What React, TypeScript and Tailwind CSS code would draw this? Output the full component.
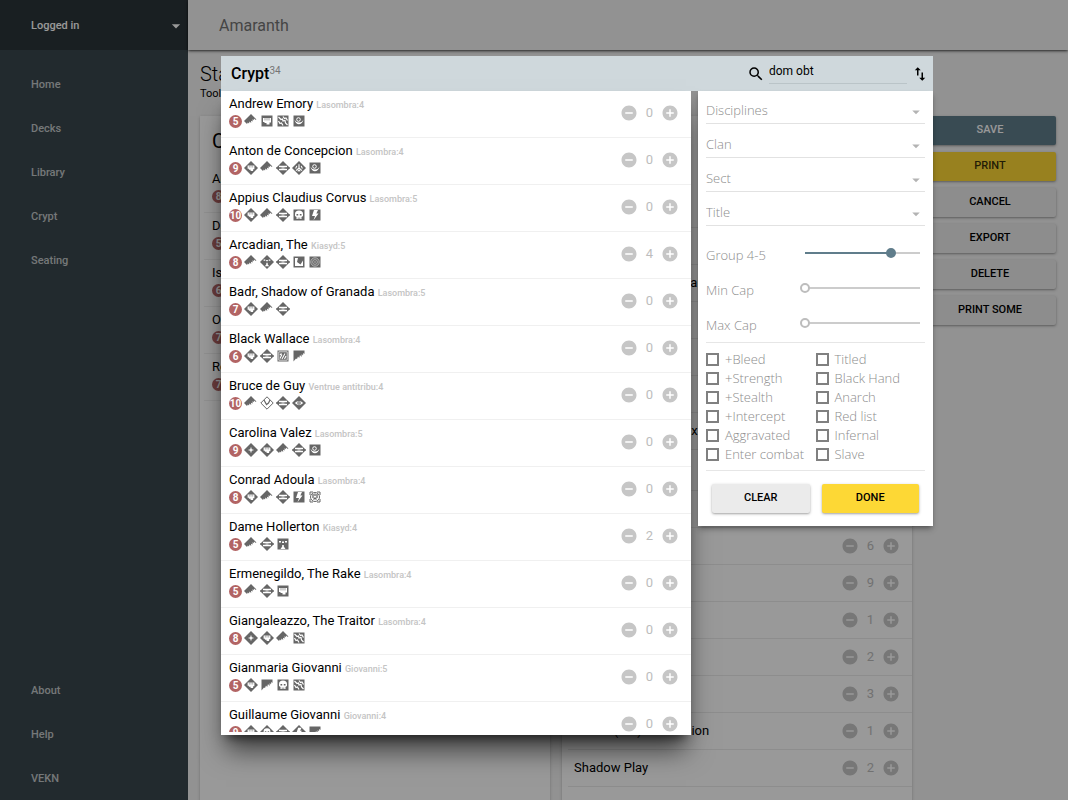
import { useState, type ReactNode } from "react";
import { MdAddCircle, MdArrowDropDown, MdRemoveCircle, MdSearch, MdSwapVert } from "react-icons/md";

type Vampire = {
    name: string;
    clan?: string;
    cap: number;
    count: number;
    // lower case is basic level (square), upper case is superior (diamond)
    disciplines: string[];
};

const vampires: Vampire[] = [
    { name: "Andrew Emory", clan: "Lasombra:4", cap: 5, count: 0, disciplines: ["DOM", "pot", "cel", "obf"] },
    { name: "Anton de Concepcion", clan: "Lasombra:4", cap: 9, count: 0, disciplines: ["POT", "DOM", "OBT", "ANI", "obf"] },
    { name: "Appius Claudius Corvus", clan: "Lasombra:5", cap: 10, count: 0, disciplines: ["POT", "DOM", "OBT", "nec", "tha"] },
    { name: "Arcadian, The", clan: "Kiasyd:5", cap: 8, count: 4, disciplines: ["DOM", "MYT", "OBT", "for", "chi"] },
    { name: "Badr, Shadow of Granada", clan: "Lasombra:5", cap: 7, count: 0, disciplines: ["POT", "DOM", "OBT"] },
    { name: "Black Wallace", clan: "Lasombra:4", cap: 6, count: 0, disciplines: ["POT", "OBT", "pro", "dom"] },
    { name: "Bruce de Guy", clan: "Ventrue antitribu:4", cap: 10, count: 0, disciplines: ["DOM", "FOR", "OBT", "AUS"] },
    { name: "Carolina Valez", clan: "Lasombra:5", cap: 9, count: 0, disciplines: ["PRE", "POT", "DOM", "OBT", "obf"] },
    { name: "Conrad Adoula", clan: "Lasombra:4", cap: 8, count: 0, disciplines: ["POT", "DOM", "OBT", "tha", "ani"] },
    { name: "Dame Hollerton", clan: "Kiasyd:4", cap: 5, count: 2, disciplines: ["DOM", "OBT", "myt"] },
    { name: "Ermenegildo, The Rake", clan: "Lasombra:4", cap: 5, count: 0, disciplines: ["DOM", "OBT", "pot"] },
    { name: "Giangaleazzo, The Traitor", clan: "Lasombra:4", cap: 8, count: 0, disciplines: ["PRE", "POT", "DOM", "cel"] },
    { name: "Gianmaria Giovanni", clan: "Giovanni:5", cap: 5, count: 0, disciplines: ["POT", "dom", "nec", "cel"] },
    { name: "Guillaume Giovanni", clan: "Giovanni:4", cap: 9, count: 0, disciplines: ["POT", "NEC", "OBT", "THA", "dom"] },
];

const deckCrypt: Vampire[] = [
    { name: "Arcadian, The", cap: 8, count: 4, disciplines: [] },
    { name: "Dame Hollerton", cap: 5, count: 2, disciplines: [] },
    { name: "Isanwayen", cap: 6, count: 2, disciplines: [] },
    { name: "Omme Enberbenight", cap: 7, count: 2, disciplines: [] },
    { name: "Roderick Phillips", cap: 7, count: 2, disciplines: [] },
];

const library = [
    [
        { name: "Blood Doll", count: 2 },
        { name: "Charisma", count: 1 },
        { name: "Power Base: Montreal", count: 1 },
        { name: "Coven, The", count: 1 },
        { name: "Club Zombie", count: 1 },
        { name: "Fame", count: 1 },
        { name: "Dreams of the Sphinx", count: 1 },
    ],
    [
        { name: "Giant's Blood", count: 1 },
        { name: "Vessel", count: 4 },
        { name: "Govern", count: 6 },
        { name: "Enchant Kindred", count: 9 },
        { name: "Wash", count: 1 },
        { name: "Mirror Walk", count: 2 },
        { name: "Parthenon", count: 3 },
        { name: "Pentex(TM) Subversion", count: 1 },
        { name: "Shadow Play", count: 2 },
    ],
    [
        { name: "Shroud", count: 2 },
    ],
];

const checks = [
    "+Bleed", "+Strength", "+Stealth", "+Intercept", "Aggravated", "Enter combat",
    "Titled", "Black Hand", "Anarch", "Red list", "Infernal", "Slave",
];

const glyphs: Record<string, ReactNode> = {
    pot: (
        <>
            <path d="M3 4h8v4.500H9.500v2H6.500V9H4.500V8H3z" fill="#fff" />
            <path d="M5 4v2.500M7 4v2.500M9 4v2.500" stroke="#666" strokeWidth=".6" />
        </>
    ),
    obt: (
        <>
            <path d="M3 5.500h8M3 8.500h8" stroke="#fff" strokeWidth="1.300" />
            <path d="M5.500 7h3" stroke="#fff" strokeWidth=".8" />
            <path d="M0 7h3.500M10.500 7H14" stroke="#666" />
        </>
    ),
    ani: <path d="M7 7.500v-5M7 7l-3.500 3M7 7l3.500 3M4.500 4.500l-1.500 3M9.500 4.500l1.500 3M5.500 11l1.500-1.500L8.500 11" stroke="#fff" strokeWidth="1.300" fill="none" />,
    obf: (
        <>
            <path d="M2.500 5.500c1 6.500 8 6 9 0-1 2-2 3-4.500 3s-3.500-1-4.500-3z" fill="#fff" />
            <circle cx="6.500" cy="5.500" r="1.800" fill="none" stroke="#fff" />
        </>
    ),
    aus: (
        <>
            <path d="M2 7Q7 2 12 7 7 12 2 7z" fill="#fff" />
            <circle cx="7" cy="7" r="2" fill="#666" />
            <circle cx="7" cy="7" r=".8" fill="#fff" />
        </>
    ),
    cel: <path d="M2.500 3l2.500 2.500 1.500-.5.500 2 2-.5.500 2.500 2 2M7 2.500l1.500 2 1.500-.5 1.500 2.500M2.500 7l1.500 2.500 1.500-.5 1.500 2.500" stroke="#fff" strokeWidth="1.200" fill="none" />,
    nec: (
        <>
            <path d="M3 6a4 3.500 0 0 1 8 0v2l-1.500 1v2h-5V9L3 8z" fill="#fff" />
            <path d="M4.500 6h1.700v1.600H4.500zM7.800 6h1.700v1.600H7.800zM5.800 9.500h.7v1.500h-.7zM7.500 9.500h.7v1.500h-.7z" fill="#666" />
        </>
    ),
    tha: <path d="M6 2h4L8.300 5.500h2.200L5.500 12.300 7 8H4z" fill="#fff" />,
    myt: <path d="M3 4h2v1.500H3zM9 4h2v1.500H9zM6.200 8h1.600v1.500L9.500 12h-5l1.700-2.500zM6 4.500h2V6H6z" fill="#fff" />,
    for: <path d="M3 3h3L5 7l3.500 2.500L11 5.500V11H3z" fill="#fff" />,
    chi: (
        <>
            <circle cx="7" cy="7" r="4.200" fill="none" stroke="#bbb" strokeWidth=".9" />
            <circle cx="7" cy="7" r="2.400" fill="none" stroke="#bbb" strokeWidth=".8" />
            <circle cx="7" cy="7" r=".8" fill="#bbb" />
        </>
    ),
    pro: (
        <>
            <path d="M2.800 2.800h8.400v8.400H2.800z" fill="none" stroke="#ddd" strokeWidth=".9" />
            <path d="M4 9.500l2-4M6 10l3-5.500M8.500 10l1.500-3M4 6l1.500-1.500" stroke="#fff" strokeWidth="1.100" />
        </>
    ),
    pre: <path d="M7 3.300l.9 2.800 2.800.9-2.800.9L7 10.700l-.9-2.800L3.300 7l2.800-.9z" fill="#fff" />,
};

function Discipline({ code }: { code: string }) {
    const key = code.toLowerCase();
    const superior = code !== key;

    if (key === "dom") {
        return (
            <svg viewBox="0 0 14 14" className="size-3.5 shrink-0" fill="#666">
                {superior ? (
                    <path d="M0 7L7 0l5.500 5.500-1.200.2-1.300-1.200-.3 1.700L8.500 5.300 8.700 7.500 7 6.700 7.200 9 5.500 7.500 5 9.500 3.800 8.500 3 10z" />
                ) : (
                    <path d="M1.500 1.500h11v3.500L11.300 4 11 6.500 9.800 5 9.500 8 8 6l-.8 3L6 7.500 5 10 4 9.500l-2.500 3z" />
                )}
            </svg>
        );
    }

    if (code === "FOR") {
        return (
            <svg viewBox="0 0 14 14" className="size-3.5 shrink-0">
                <path d="M7 .8L13.200 7 7 13.200.8 7z" fill="#fff" stroke="#666" />
                <path d="M4 4l2.500 4.500L8.500 7l1.500-3" fill="none" stroke="#666" strokeWidth="1.200" />
            </svg>
        );
    }

    if (code === "ani") {
        return (
            <svg viewBox="0 0 14 14" className="size-3.5 shrink-0" fill="none" stroke="#666">
                <path d="M2 5V2h3M9 2h3v3M12 9v3H9M5 12H2V9" />
                <circle cx="7" cy="7" r="4.500" />
                <path d="M5 4v4M7 3.500V6M9 4v4M5.500 9.500L7 8l1.500 1.500" strokeWidth="1.300" />
            </svg>
        );
    }

    return (
        <svg viewBox="0 0 14 14" className="size-3.5 shrink-0">
            <path d={superior ? "M7 0l7 7-7 7-7-7z" : "M1.500 1.500h11v11h-11z"} fill="#666" />
            {superior && key !== "obt" ? <g transform="translate(1.050 1.050) scale(.85)">{glyphs[key]}</g> : glyphs[key]}
        </svg>
    );
}

function Counter({ count }: { count: number }) {
    const [value, setValue] = useState(count);
    return (
        <div className="flex items-center text-[13px] text-[#bdbdbd]">
            <button aria-label="Remove" className="text-[#c6c6c6]" onClick={() => setValue(Math.max(0, value - 1))}>
                <MdRemoveCircle size={18} />
            </button>
            <span className="w-[23px] text-center">{value}</span>
            <button aria-label="Add" className="text-[#c6c6c6]" onClick={() => setValue(value + 1)}>
                <MdAddCircle size={18} />
            </button>
        </div>
    );
}

function VampireRow({ vampire }: { vampire: Vampire }) {
    return (
        <li className="flex h-[47px] items-center justify-between border-b border-[#f0f0f0] pb-0.5 pl-2 pr-3">
            <div className="self-start pt-[3px]">
                <div className="whitespace-nowrap text-[13px] leading-[19px]">
                    {vampire.name} <span className="text-[9px] font-medium leading-none text-[#c4c4c4]">{vampire.clan}</span>
                </div>
                <div className="flex h-4 items-center gap-0.5">
                    <span className="flex size-[13px] items-center justify-center rounded-full bg-[#b26464] text-[10px] font-bold text-white">
                        {vampire.cap}
                    </span>
                    {vampire.disciplines.map((code) => (
                        <Discipline key={code} code={code} />
                    ))}
                </div>
            </div>
            <Counter count={vampire.count} />
        </li>
    );
}

function Sidebar() {
    const linkClass = "flex h-11 items-center pt-0.5 text-[#c3c8ca]";
    return (
        <aside className="flex w-[188px] shrink-0 flex-col bg-[#3a474d] text-[11px] font-medium">
            <button className="flex h-[50px] shrink-0 items-center justify-between bg-[#2b3439] pl-[31px] pr-0.5 pt-0.5 text-white">
                Logged in
                <MdArrowDropDown size={20} />
            </button>
            <nav className="flex flex-1 flex-col pl-[31px] pt-3">
                {["Home", "Decks", "Library", "Crypt", "Seating"].map((item) => (
                    <a key={item} href="#" className={linkClass}>{item}</a>
                ))}
                <div className="mt-auto">
                    {["About", "Help", "VEKN"].map((item) => (
                        <a key={item} href="#" className={linkClass}>{item}</a>
                    ))}
                </div>
            </nav>
        </aside>
    );
}

function DeckPage() {
    const buttonClass = "h-[29px] rounded-xs text-[11px] font-medium shadow-sm shadow-black/30";
    return (
        <main className="flex min-w-0 flex-1 flex-col bg-[#f3f3f3]">
            <header className="flex h-[50px] shrink-0 items-center bg-[#f3f3f3] pl-[31px] pt-0.5 text-base text-[#737373] shadow-sm shadow-black/60">
                Amaranth
            </header>
            <div className="min-h-0 flex-1 overflow-hidden px-3 pt-3">
                <h1 className="text-xl font-light leading-6">Stars</h1>
                <p className="text-[11px] leading-4">Toolbox</p>
                <div className="mt-3.5 grid grid-cols-[1fr_1fr_132px] items-start gap-3">
                    <section className="h-screen bg-white shadow-sm shadow-black/20">
                        <h2 className="flex h-[50px] items-center pl-3 text-xl">Crypt</h2>
                        <ul className="px-1">
                            {deckCrypt.map((vampire) => (
                                <VampireRow key={vampire.name} vampire={vampire} />
                            ))}
                        </ul>
                    </section>
                    <section className="bg-white shadow-sm shadow-black/20">
                        <h2 className="flex h-[75px] items-center pl-3 text-xl">Library</h2>
                        <div className="flex flex-col gap-1">
                            {library.map((group, index) => (
                                <ul key={index}>
                                    {group.map((card) => (
                                        <li key={card.name} className="ml-1.5 flex h-[37px] items-center justify-between border-b border-[#ebebeb] pl-1.5 pr-3 text-[13px]">
                                            {card.name}
                                            <Counter count={card.count} />
                                        </li>
                                    ))}
                                </ul>
                            ))}
                        </div>
                    </section>
                    <div className="flex flex-col gap-[7px]">
                        <button className={`${buttonClass} bg-[#607d8b] text-white`}>SAVE</button>
                        <button className={`${buttonClass} bg-[#fdd835] text-black/80`}>PRINT</button>
                        {["CANCEL", "EXPORT", "DELETE", "PRINT SOME"].map((label) => (
                            <button key={label} className={`${buttonClass} bg-[#ebebeb]`}>{label}</button>
                        ))}
                    </div>
                </div>
            </div>
        </main>
    );
}

function Slider({ label, id, max, initial }: { label: string; id: string; max: number; initial: number }) {
    const [value, setValue] = useState(initial);
    const thumb = value > 0
        ? "[&::-webkit-slider-thumb]:border-[#607d8b] [&::-webkit-slider-thumb]:bg-[#607d8b]"
        : "[&::-webkit-slider-thumb]:border-[#bdbdbd] [&::-webkit-slider-thumb]:bg-white";
    return (
        <div className="flex h-[35px] items-center">
            <label htmlFor={id} className="flex-1 pt-1.5">{label}</label>
            <div className="relative flex w-[125px] items-center">
                <div className="absolute inset-x-[5px] h-0.5 bg-[#cccccc]">
                    <div className="h-0.5 bg-[#607d8b]" style={{ width: `${(value / max) * 100}%` }} />
                </div>
                <input
                    id={id}
                    type="range"
                    max={max}
                    value={value}
                    onChange={(e) => setValue(Number(e.target.value))}
                    className={`relative h-2.5 w-full appearance-none bg-transparent [&::-webkit-slider-thumb]:size-2.5 [&::-webkit-slider-thumb]:appearance-none [&::-webkit-slider-thumb]:rounded-full [&::-webkit-slider-thumb]:border-2 ${thumb}`}
                />
            </div>
        </div>
    );
}

function Filters({ onClose }: { onClose: () => void }) {
    const buttonClass = "h-[29px] flex-1 rounded-xs font-[Roboto] text-[11px] font-medium text-black shadow-sm shadow-black/30";
    return (
        <form className="w-[235px] bg-white px-2 pb-[13px] font-['Open_Sans',sans-serif] text-[13px] font-light text-[#8c8c8c] shadow-md shadow-black/30" onSubmit={(e) => e.preventDefault()}>
            <div className="flex flex-col gap-1 pt-[3px]">
                {["Disciplines", "Clan", "Sect", "Title"].map((label) => (
                    <div key={label} className="relative h-[30px]">
                        <select aria-label={label} className="h-full w-full appearance-none border-b border-[#e2e2e2] bg-transparent pt-1">
                            <option>{label}</option>
                        </select>
                        <MdArrowDropDown size={18} className="pointer-events-none absolute right-0 top-[9px] text-[#b3b3b3]" />
                    </div>
                ))}
            </div>
            <div className="pb-0.5 pt-[9px]">
                <Slider id="group" label="Group 4-5" max={4} initial={3} />
                <Slider id="min-cap" label="Min Cap" max={11} initial={0} />
                <Slider id="max-cap" label="Max Cap" max={11} initial={0} />
            </div>
            <div className="grid grid-flow-col grid-cols-2 grid-rows-6 border-y border-[#e6e6e6] pb-1.5 pt-[7px]">
                {checks.map((label) => (
                    <label key={label} className="flex h-[19px] items-center gap-1.5 whitespace-nowrap">
                        <input type="checkbox" className="size-[13px] shrink-0 appearance-none border-2 border-[#808080] checked:bg-[#808080]" />
                        {label}
                    </label>
                ))}
            </div>
            <div className="flex gap-3 px-1.5 pt-[13px]">
                <button type="reset" className={`${buttonClass} bg-[#ebebeb]`}>CLEAR</button>
                <button type="button" onClick={onClose} className={`${buttonClass} bg-[#fdd835]`}>DONE</button>
            </div>
        </form>
    );
}

function CryptDialog({ onClose }: { onClose: () => void }) {
    return (
        <div role="dialog" aria-labelledby="crypt-title" className="absolute left-[221px] top-14 w-[712px]">
            <header className="flex h-[35px] items-center bg-[#cfd8dc] pl-2.5 pr-1">
                <h2 id="crypt-title" className="flex-1 text-base font-medium">
                    Crypt<sup className="text-[10px] font-normal text-[#757575]">34</sup>
                </h2>
                <label htmlFor="search" aria-label="Search" className="pr-1">
                    <MdSearch size={18} />
                </label>
                <input id="search" type="text" defaultValue="dom obt" className="mr-1 h-5 w-[138px] border-b border-[#bac4c8] pb-1 text-xs outline-none" />
                <button aria-label="Sort">
                    <MdSwapVert size={18} />
                </button>
            </header>
            <div className="flex items-start gap-[7px]">
                <div className="flex-1 bg-white pb-[3px] shadow-xl shadow-black/60">
                    <ul className="h-[641px] overflow-hidden">
                        {vampires.map((vampire) => (
                            <VampireRow key={vampire.name} vampire={vampire} />
                        ))}
                    </ul>
                </div>
                <Filters onClose={onClose} />
            </div>
        </div>
    );
}

export default function App() {
    const [open, setOpen] = useState(true);
    return (
        <div className="relative flex h-screen overflow-hidden font-[Roboto,sans-serif] text-black">
            <Sidebar />
            <DeckPage />
            {open && (
                <>
                    <div className="absolute inset-0 bg-black/40" onClick={() => setOpen(false)} />
                    <CryptDialog onClose={() => setOpen(false)} />
                </>
            )}
        </div>
    );
}
